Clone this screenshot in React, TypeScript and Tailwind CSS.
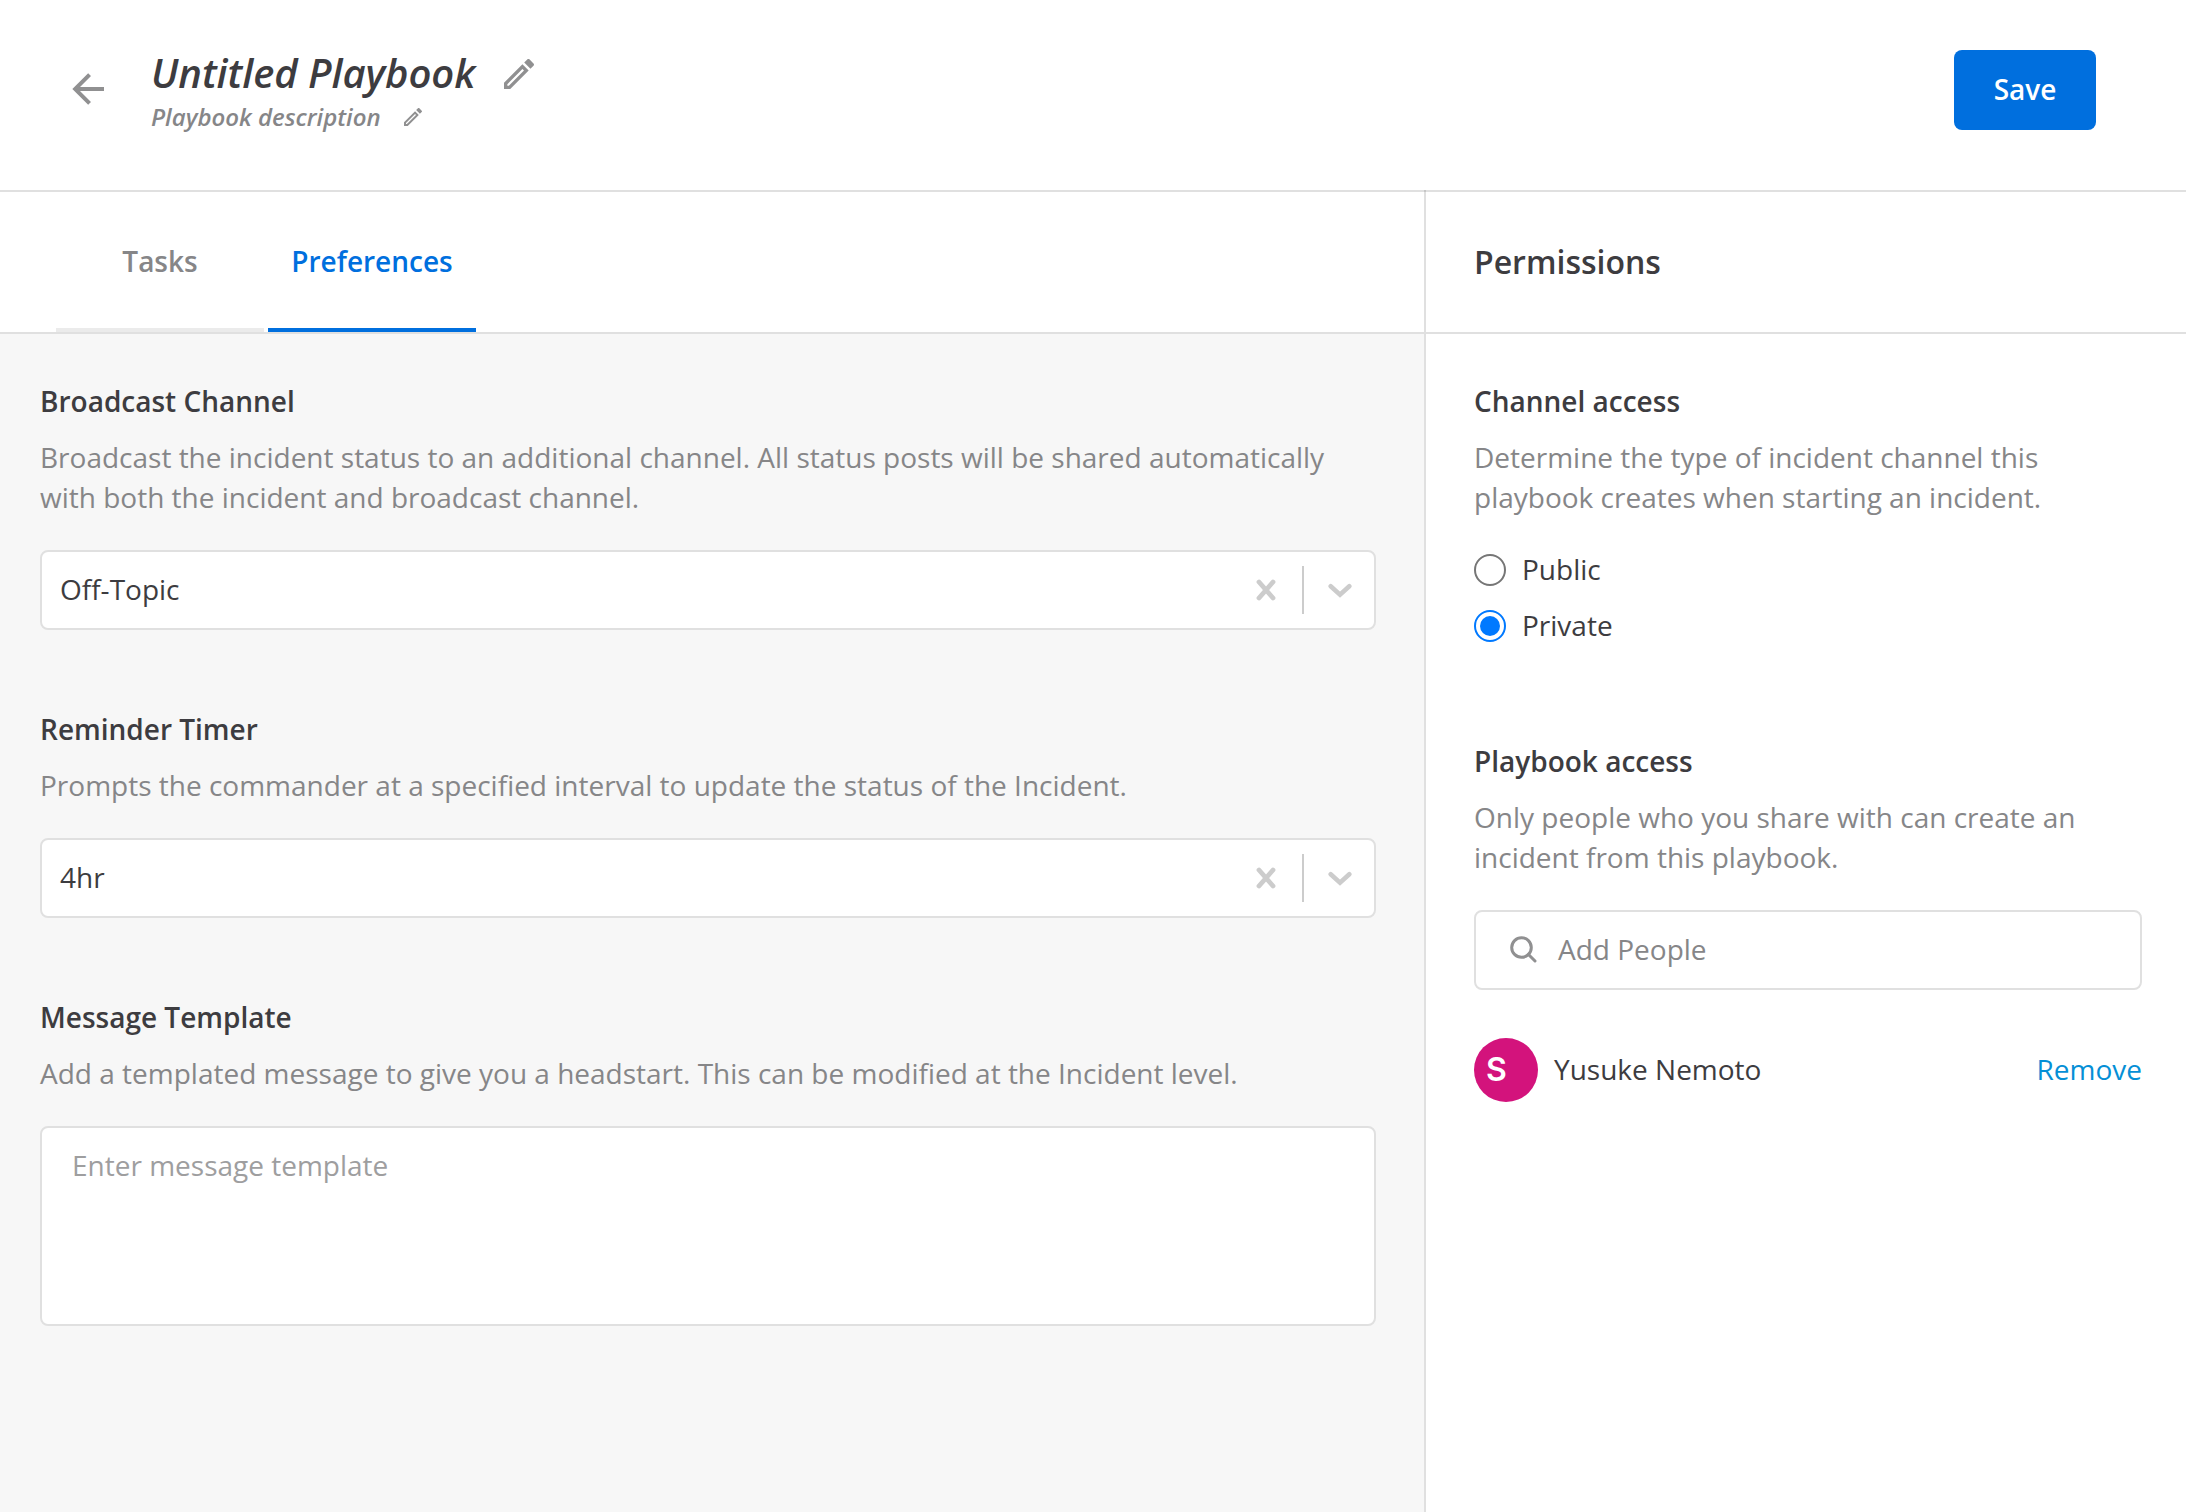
import React from "react";

const PENCIL =
  "M14.06 9.02l.92.92L5.92 19H5v-.92l9.06-9.06M17.66 3c-.25 0-.51.1-.7.29l-1.83 1.83 3.75 3.75 1.83-1.83c.39-.39.39-1.02 0-1.41l-2.34-2.34c-.2-.2-.45-.29-.71-.29zm-3.6 3.19L3 17.25V21h3.75L17.81 9.94l-3.75-3.75z";

function Pencil({ className }: { className: string }) {
  return (
    <svg viewBox="3 3 18 18" className={className} fill="#909091">
      <path d={PENCIL} />
    </svg>
  );
}

function Heading({ children }: { children: React.ReactNode }) {
  return <h3 className="text-[28px] leading-10 font-semibold">{children}</h3>;
}

function Description({ children }: { children: React.ReactNode }) {
  return <p className="mt-4 text-[28px] leading-10 text-[#868688]">{children}</p>;
}

function Select({ value }: { value: string }) {
  return (
    <div className="mt-[33px] flex h-20 items-center rounded-lg border-2 border-[#e0e0e0] bg-white pl-[18px]">
      <span className="flex-1 pb-0.5 text-[28px] leading-10">{value}</span>
      <svg className="h-[22px] w-5" viewBox="0 0 20 22" fill="none" stroke="#ccc" strokeWidth="4.8" strokeLinecap="round">
        <path d="M3 3L17 19M17 3L3 19" />
      </svg>
      <span className="ml-[26px] h-12 w-0.5 bg-[#ccc]" />
      <svg className="mt-0.5 mr-[22px] ml-6 h-4 w-6" viewBox="0 0 24 16" fill="none" stroke="#ccc" strokeWidth="4.6" strokeLinecap="round">
        <path d="M2.7 3.2L12 11.6L21.3 3.2" />
      </svg>
    </div>
  );
}

function Radio({ label, checked }: { label: string; checked?: boolean }) {
  return (
    <div className="flex h-8 items-center gap-4">
      {checked ? (
        <span className="flex size-8 items-center justify-center rounded-full border-2 border-[#0079ff]">
          <span className="size-5 rounded-full bg-[#0079ff]" />
        </span>
      ) : (
        <span className="size-8 rounded-full border-2 border-[#767676]" />
      )}
      <span className="pb-0.5 text-[28px] leading-10">{label}</span>
    </div>
  );
}

export default function App() {
  return (
    <div className="flex h-[1512px] w-[2186px] flex-col overflow-hidden bg-white font-['Open_Sans',sans-serif] text-[#3d3c40]">
      <header className="flex h-48 shrink-0 items-start border-b-2 border-[#3d3c40]/16 pr-[90px] pl-[71px]">
        <svg className="mt-[73px] ml-px size-8" viewBox="4 4 16 16" fill="#909091">
          <path d="M20 11v2H8l5.5 5.5-1.42 1.42L4.16 12l7.92-7.92L13.5 5.5 8 11h12z" />
        </svg>
        <div className="mt-[47px] ml-[47px] flex-1">
          <div className="flex items-center">
            <h1 className="text-[40px] leading-[52px] font-semibold tracking-[-0.06px] italic">Untitled Playbook</h1>
            <Pencil className="mt-0.5 ml-[29px] size-[30px]" />
          </div>
          <div className="flex items-center">
            <p className="text-[24px] leading-9 font-semibold text-[#868688] italic">Playbook description</p>
            <Pencil className="ml-[23px] size-[18px]" />
          </div>
        </div>
        <button className="mt-[50px] h-20 w-[142px] rounded-lg bg-[#006fde] pb-0.5 text-[28px] font-semibold text-white">Save</button>
      </header>

      <div className="-mt-0.5 flex min-h-0 flex-1">
        <main className="flex w-[1426px] shrink-0 flex-col border-r-2 border-[#3d3c40]/16">
          <nav className="flex h-36 shrink-0 gap-1 border-b-2 border-[#e0e0e0] pt-0.5 pl-14 text-[28px] font-semibold">
            <button className="w-52 border-b-4 border-[#ebebeb] pt-0.5 text-[#868688]">Tasks</button>
            <button className="w-52 border-b-4 border-[#006fde] pt-0.5 text-[#006fde]">Preferences</button>
          </nav>
          <div className="flex flex-1 flex-col gap-[79px] bg-[#f7f7f7] pt-[47px] pr-12 pl-10">
            <section>
              <Heading>Broadcast Channel</Heading>
              <Description>
                Broadcast the incident status to an additional channel. All status posts will be shared automatically
                <br />
                with both the incident and broadcast channel.
              </Description>
              <Select value="Off-Topic" />
            </section>
            <section>
              <Heading>Reminder Timer</Heading>
              <Description>Prompts the commander at a specified interval to update the status of the Incident.</Description>
              <Select value="4hr" />
            </section>
            <section>
              <Heading>Message Template</Heading>
              <Description>Add a templated message to give you a headstart. This can be modified at the Incident level.</Description>
              <textarea
                placeholder="Enter message template"
                className="mt-[33px] block h-[200px] w-full resize-none rounded-lg border-2 border-[#e0e0e0] bg-white px-[30px] py-[17px] text-[28px] leading-10 placeholder:text-[#9e9e9f]"
              />
            </section>
          </div>
        </main>

        <aside className="flex flex-1 flex-col">
          <div className="flex h-36 shrink-0 items-center border-b-2 border-[#e0e0e0] pt-0.5 pl-12">
            <h2 className="text-[32px] leading-10 font-semibold">Permissions</h2>
          </div>
          <div className="pt-[47px] pr-11 pl-12">
            <Heading>Channel access</Heading>
            <Description>
              Determine the type of incident channel this
              <br />
              playbook creates when starting an incident.
            </Description>
            <div className="mt-[37px] flex flex-col gap-6">
              <Radio label="Public" />
              <Radio label="Private" checked />
            </div>
            <div className="mt-[99px]">
              <Heading>Playbook access</Heading>
              <Description>
                Only people who you share with can create an
                <br />
                incident from this playbook.
              </Description>
              <div className="mt-[33px] flex h-20 items-center rounded-lg border-2 border-[#e0e0e0] pl-[34px]">
                <svg className="mb-0.5 size-[27px]" viewBox="0 0 27 27" fill="none" stroke="#909091" strokeWidth="3">
                  <circle cx="11.5" cy="11.5" r="9.8" />
                  <path d="M18.5 18.5L25 25" strokeLinecap="round" />
                </svg>
                <span className="ml-[21px] pb-0.5 text-[28px] leading-10 text-[#868688]">Add People</span>
              </div>
            </div>
            <div className="mt-12 flex h-16 items-center">
              <span className="flex size-16 items-center rounded-full bg-[#d3137c] pl-3 font-[Inter] text-[32px] leading-none font-semibold text-white">S</span>
              <span className="ml-4 flex-1 pb-0.5 text-[28px] leading-10">Yusuke Nemoto</span>
              <a className="pb-0.5 text-[28px] leading-10 text-[#058fd6]">Remove</a>
            </div>
          </div>
        </aside>
      </div>
    </div>
  );
}
